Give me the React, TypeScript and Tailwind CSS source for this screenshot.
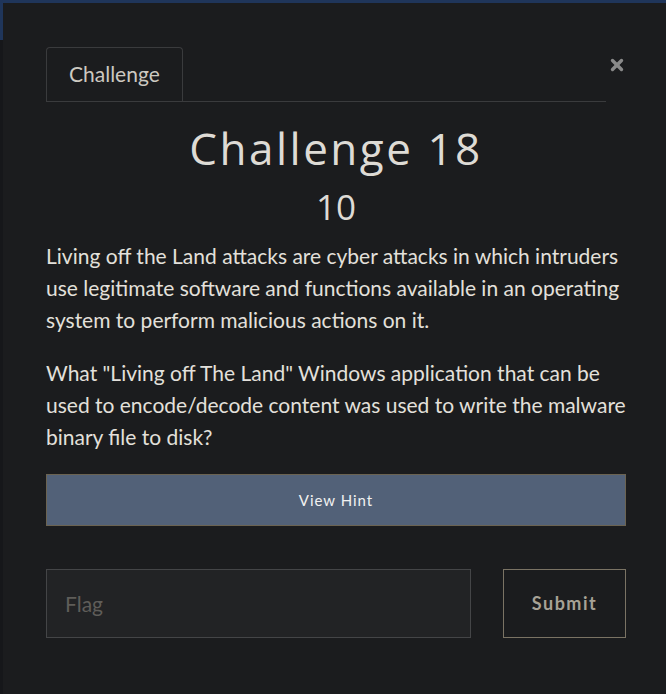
import { X } from "lucide-react";

export default function App() {
  return (
    <div className="relative h-[694px] w-full overflow-hidden bg-[#16171a] font-['Lato',sans-serif]">
      <div className="h-[40px] bg-[#1f355a]" />

      <div className="absolute left-[3px] top-[3px] h-[720px] w-[700px] bg-[#1b1c1e] pl-[43px] pt-[44px]">
        <div className="w-[580px]">
          <div className="flex items-start">
            <div className="flex flex-1 border-b border-[#3a3b3d]">
              <div className="-mb-px flex h-[55px] items-center rounded-t-[4px] border border-b-0 border-[#3a3b3d] px-[22px] pb-[2px] text-[21px] text-[#cdc9c1]">
                Challenge
              </div>
            </div>
            <button className="ml-[2px] mt-[8px] flex w-[18px] justify-end text-[#8a8a8a]" aria-label="Close">
              <X className="h-[20px] w-[20px]" strokeWidth={4.5} />
            </button>
          </div>

          <h2 className="mt-[18px] text-center font-['Open_Sans',sans-serif] text-[44px] leading-[56px] tracking-[2.5px] text-[#dedbd5]">
            Challenge 18
          </h2>
          <div className="mt-[8px] text-center font-['Open_Sans',sans-serif] text-[35px] leading-[46px] text-[#dedbd5]">
            10
          </div>

          <div className="mt-[10px] text-[21px] leading-[32px] text-[#e3e0db]">
            <p>
              Living off the Land attacks are cyber attacks in which intruders use legitimate software and functions
              available in an operating system to perform malicious actions on it.
            </p>
            <p className="mt-[21px]">
              What "Living off The Land" Windows application that can be used to encode/decode content was used to
              write the malware binary file to disk?
            </p>
          </div>

          <button className="mt-[21px] flex h-[52px] w-full items-center justify-center border border-[#6b6352] bg-[#526178] text-[15px] tracking-[1px] text-[#f1f1f1]">
            View Hint
          </button>

          <div className="mt-[43px] flex items-stretch justify-between">
            <input
              placeholder="Flag"
              className="h-[69px] w-[425px] border border-[#444547] bg-[#222325] px-[18px] text-[21px] text-[#ddd] outline-none placeholder:text-[#5f5d59]"
            />
            <button className="h-[69px] w-[123px] border border-[#7a7364] bg-[#1b1c1e] text-[18px] font-bold tracking-[1.5px] text-[#a7a296]">
              Submit
            </button>
          </div>
        </div>
      </div>
    </div>
  );
}
